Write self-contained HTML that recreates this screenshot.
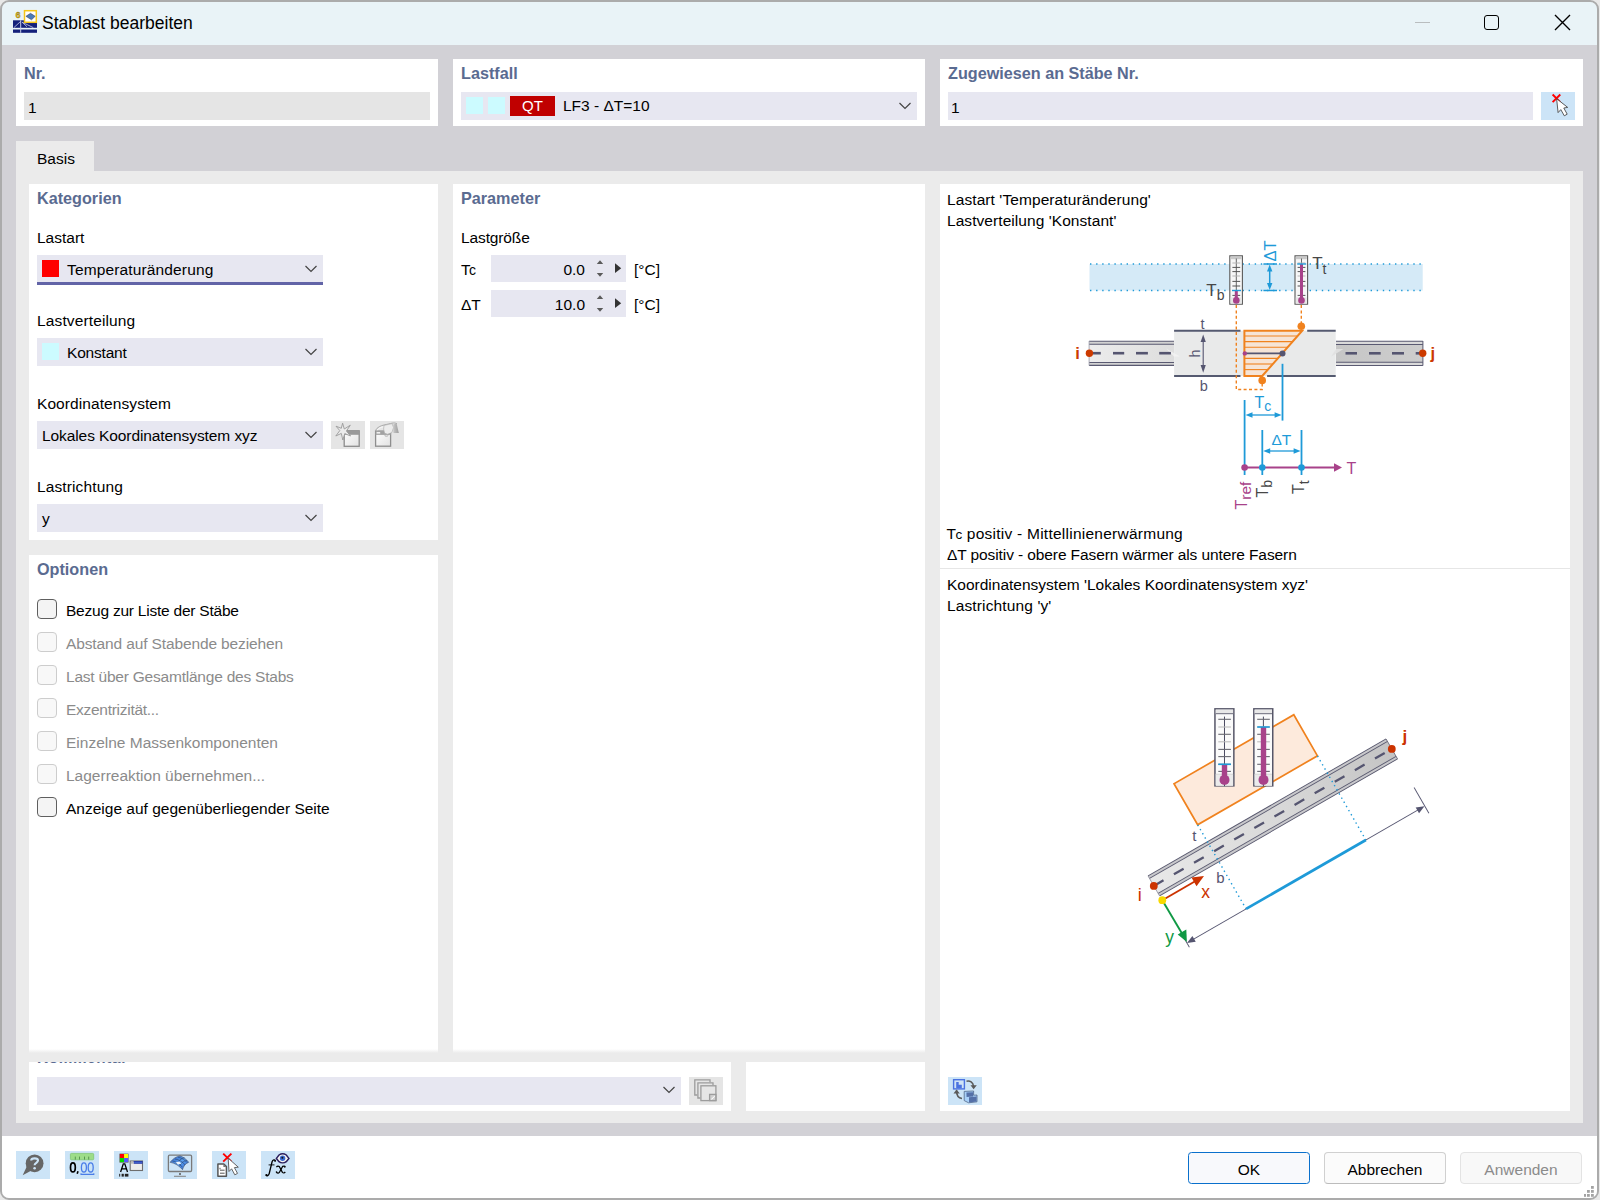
<!DOCTYPE html>
<html><head><meta charset="utf-8">
<style>
*{box-sizing:border-box}
html,body{margin:0;padding:0}
body{width:1600px;height:1200px;overflow:hidden;position:relative;background:#e8e8e8;font-family:"Liberation Sans",sans-serif;font-size:15.5px;color:#000}
.a{position:absolute}
.t{position:absolute;white-space:nowrap;line-height:20px;height:20px}
.h{position:absolute;white-space:nowrap;line-height:20px;height:20px;font-weight:bold;color:#5a6b91;font-size:16.2px}
.w{position:absolute;background:#fff}
.dd{position:absolute;background:#e7e7f1}
.chev{position:absolute;width:12px;height:8px}
.cb{position:absolute;width:20px;height:20px;border:1px solid #5f5f5f;border-radius:4px;background:#f4f4f4}
.cbd{border-color:#cdcdcd;background:#f8f8f8}
.dis{color:#8b8b8b}
.ib{position:absolute;background:#cce4f7}
</style></head><body>
<!-- window frame -->
<div class="a" id="win" style="left:0;top:0;width:1599px;height:1200px;border:2px solid #ababab;border-radius:9px;overflow:hidden;background:#d2d1d6">
  <div class="a" style="left:0;top:0;width:1600px;height:43px;background:#e9f3f7"></div>
  <div class="a" style="left:0;top:1134px;width:1600px;height:70px;background:#fff"></div>
</div>

<!-- title bar -->
<svg class="a" style="left:10px;top:7px" width="30" height="28" viewBox="10 7 30 28">
  <rect x="13" y="20.3" width="24" height="7.5" fill="#14207a"/>
  <rect x="13" y="29.5" width="24" height="3.3" fill="#14207a"/>
  <line x1="20.7" y1="20.3" x2="20.7" y2="32.8" stroke="#c8cce8" stroke-width="1"/>
  <path d="M14 27.5 L20.5 21.5 M22.1 22.2 L33.3 27.6 M22.1 22.2 L27 26.8" stroke="#c8cce8" stroke-width="0.8" fill="none"/>
  <rect x="24.5" y="10.7" width="11.8" height="11.6" fill="#fff" stroke="#f5c518" stroke-width="1.5"/>
  <path d="M25.9 16.3 L30.5 13.3 L35.2 16.3 L31.5 19.8 Z" fill="#4a7ab8" stroke="#334" stroke-width="0.5"/>
  <text x="15.6" y="18.4" font-size="9" font-weight="bold" fill="#e8b800" stroke="#6a5a20" stroke-width="0.3" font-family="Liberation Sans">6</text>
</svg>
<div class="t" style="left:42px;top:13px;font-size:17.5px">Stablast bearbeiten</div>
<div class="a" style="left:1415px;top:22px;width:15px;height:1px;background:#b9bdbf"></div>
<div class="a" style="left:1484px;top:15px;width:15px;height:15px;border:1.7px solid #000;border-radius:3px"></div>
<svg class="a" style="left:1554px;top:14px" width="17" height="17" viewBox="0 0 17 17"><path d="M1 1 L16 16 M16 1 L1 16" stroke="#000" stroke-width="1.4"/></svg>

<!-- top panels -->
<div class="w" style="left:16px;top:59px;width:422px;height:67px"></div>
<div class="h" style="left:24px;top:63px">Nr.</div>
<div class="a" style="left:24px;top:92px;width:406px;height:28px;background:#e5e5e5"></div>
<div class="t" style="left:28px;top:98px">1</div>

<div class="w" style="left:453px;top:59px;width:472px;height:67px"></div>
<div class="h" style="left:461px;top:63px">Lastfall</div>
<div class="dd" style="left:461px;top:92px;width:456px;height:28px"></div>
<div class="a" style="left:466px;top:97px;width:17px;height:17px;background:#ccfbff"></div>
<div class="a" style="left:488px;top:97px;width:17px;height:17px;background:#ccfbff"></div>
<div class="a" style="left:510px;top:96px;width:45px;height:20px;background:#c00000;color:#fff;text-align:center;line-height:20px;font-size:15px">QT</div>
<div class="t" style="left:563px;top:96px">LF3 - ΔT=10</div>
<svg class="chev" style="left:899px;top:102px" viewBox="0 0 12 8"><path d="M0.5 1 L6 6.5 L11.5 1" stroke="#444" stroke-width="1.2" fill="none"/></svg>

<div class="w" style="left:940px;top:59px;width:643px;height:67px"></div>
<div class="h" style="left:948px;top:63px">Zugewiesen an Stäbe Nr.</div>
<div class="dd" style="left:948px;top:92px;width:585px;height:28px"></div>
<div class="t" style="left:951px;top:98px">1</div>
<div class="ib" style="left:1541px;top:92px;width:34px;height:28px"></div>
<svg class="a" style="left:1541px;top:92px" width="34" height="28" viewBox="1541 92 34 28">
  <path d="M1552.6 94.5 L1560.3 102.2 M1560.3 94.5 L1552.6 102.2" stroke="#f00" stroke-width="1.9"/>
  <path d="M1556.6 98.7 L1558.1 112.6 L1560.8 109.6 L1564.3 115.8 L1567.2 114.2 L1563.8 108 L1567.7 107.4 Z" fill="#fff" stroke="#4a4a4a" stroke-width="0.9" stroke-linejoin="round"/>
</svg>

<!-- tab -->
<div class="a" style="left:16px;top:141px;width:78px;height:30px;background:#ebebeb"></div>
<div class="t" style="left:37px;top:149px">Basis</div>
<div class="a" style="left:16px;top:171px;width:1567px;height:952px;background:#ebebeb"></div>

<!-- Kategorien -->
<div class="w" style="left:29px;top:184px;width:409px;height:356px"></div>
<div class="h" style="left:37px;top:188px">Kategorien</div>
<div class="t" style="left:37px;top:228px">Lastart</div>
<div class="dd" style="left:37px;top:255px;width:286px;height:30px"></div>
<div class="a" style="left:37px;top:282px;width:286px;height:3px;background:#6264a7"></div>
<div class="a" style="left:42px;top:260px;width:17px;height:17px;background:#ff0000"></div>
<div class="t" style="left:67px;top:260px;letter-spacing:0.14px">Temperaturänderung</div>
<svg class="chev" style="left:305px;top:265px" viewBox="0 0 12 8"><path d="M0.5 1 L6 6.5 L11.5 1" stroke="#444" stroke-width="1.2" fill="none"/></svg>

<div class="t" style="left:37px;top:311px;letter-spacing:0.13px">Lastverteilung</div>
<div class="dd" style="left:37px;top:338px;width:286px;height:28px"></div>
<div class="a" style="left:42px;top:343px;width:17px;height:17px;background:#ccfbff"></div>
<div class="t" style="left:67px;top:343px;letter-spacing:-0.2px">Konstant</div>
<svg class="chev" style="left:305px;top:348px" viewBox="0 0 12 8"><path d="M0.5 1 L6 6.5 L11.5 1" stroke="#444" stroke-width="1.2" fill="none"/></svg>

<div class="t" style="left:37px;top:394px;letter-spacing:0.08px">Koordinatensystem</div>
<div class="dd" style="left:37px;top:421px;width:286px;height:28px"></div>
<div class="t" style="left:42px;top:426px;letter-spacing:-0.09px">Lokales Koordinatensystem xyz</div>
<svg class="chev" style="left:305px;top:431px" viewBox="0 0 12 8"><path d="M0.5 1 L6 6.5 L11.5 1" stroke="#444" stroke-width="1.2" fill="none"/></svg>
<div class="a" style="left:331px;top:421px;width:34px;height:28px;background:#e5e5e5"></div>
<div class="a" style="left:370px;top:421px;width:34px;height:28px;background:#e5e5e5"></div>
<svg class="a" style="left:331px;top:421px" width="34" height="28" viewBox="331 421 34 28">
  <defs><linearGradient id="wg" x1="0" y1="0" x2="1" y2="1"><stop offset="0" stop-color="#fff"/><stop offset="1" stop-color="#e2e2e2"/></linearGradient></defs>
  <rect x="344.2" y="430.8" width="15" height="15.5" fill="url(#wg)" stroke="#8c8c8c" stroke-width="1.3"/>
  <rect x="344.2" y="430.8" width="15" height="4" fill="#9a9a9a"/>
  <path d="M342.6 423.2 L344.3 429 L350.3 425.2 L346.4 431 L350.6 436 L344.8 433.6 L342.8 440 L341.3 433.4 L335.8 436 L339.8 430.6 L336 426.2 L341.3 428.3 Z" fill="#ececec" stroke="#9a9a9a" stroke-width="0.9" stroke-linejoin="round"/>
</svg>
<svg class="a" style="left:370px;top:421px" width="34" height="28" viewBox="370 421 34 28">
  <defs><linearGradient id="cuff" x1="0" x2="1"><stop offset="0" stop-color="#c8c8c8"/><stop offset="1" stop-color="#9c9c9c"/></linearGradient></defs>
  <rect x="375.6" y="431.1" width="15" height="15.1" fill="url(#wg)" stroke="#8e8e8e" stroke-width="1.3"/>
  <rect x="375.6" y="431.1" width="15" height="3.8" fill="#a2a2a2"/>
  <rect x="376.6" y="432" width="3.6" height="1.6" fill="#f0f0f0"/>
  <path d="M375.4 430.6 C377 427.2 381 425.6 384 425 C387 424.3 390 423.7 392 423.2 C394 422.7 395.8 423 397 423.8" fill="none" stroke="#a4a4a4" stroke-width="0.9"/>
  <path d="M384 425.4 L392 423.6 L393.6 427.5 L391.8 432.6 L387.6 434.2 L384.6 433.2 L383.6 429 Z" fill="#ececec" stroke="#a8a8a8" stroke-width="0.6"/>
  <path d="M393.2 424.4 L396.6 423.4 L398.8 433 L393.4 433 Z" fill="url(#cuff)"/>
  <path d="M377 430.2 C378.5 428.4 381 427.3 383.2 426.8" fill="none" stroke="#fafafa" stroke-width="0.9"/>
  <ellipse cx="386.4" cy="435.6" rx="1.6" ry="0.9" fill="#e0e0e0" stroke="#a0a0a0" stroke-width="0.5"/>
</svg>

<div class="t" style="left:37px;top:477px;letter-spacing:0.12px">Lastrichtung</div>
<div class="dd" style="left:37px;top:504px;width:286px;height:28px"></div>
<div class="t" style="left:42px;top:509px">y</div>
<svg class="chev" style="left:305px;top:514px" viewBox="0 0 12 8"><path d="M0.5 1 L6 6.5 L11.5 1" stroke="#444" stroke-width="1.2" fill="none"/></svg>

<!-- Optionen -->
<div class="w" style="left:29px;top:555px;width:409px;height:498px;background:linear-gradient(#fff 0,#fff 494px,#ebebeb 498px)"></div>
<div class="h" style="left:37px;top:559px">Optionen</div>
<div class="cb" style="left:37px;top:599px"></div><div class="t" style="left:66px;top:601px;letter-spacing:-0.225px">Bezug zur Liste der Stäbe</div>
<div class="cb cbd" style="left:37px;top:632px"></div><div class="t dis" style="left:66px;top:634px;letter-spacing:-0.125px">Abstand auf Stabende beziehen</div>
<div class="cb cbd" style="left:37px;top:665px"></div><div class="t dis" style="left:66px;top:667px;letter-spacing:-0.217px">Last über Gesamtlänge des Stabs</div>
<div class="cb cbd" style="left:37px;top:698px"></div><div class="t dis" style="left:66px;top:700px;letter-spacing:-0.28px">Exzentrizität...</div>
<div class="cb cbd" style="left:37px;top:731px"></div><div class="t dis" style="left:66px;top:733px">Einzelne Massenkomponenten</div>
<div class="cb cbd" style="left:37px;top:764px"></div><div class="t dis" style="left:66px;top:766px">Lagerreaktion übernehmen...</div>
<div class="cb" style="left:37px;top:797px"></div><div class="t" style="left:66px;top:799px">Anzeige auf gegenüberliegender Seite</div>

<!-- Parameter -->
<div class="w" style="left:453px;top:184px;width:472px;height:869px;background:linear-gradient(#fff 0,#fff 865px,#ebebeb 869px)"></div>
<div class="h" style="left:461px;top:188px">Parameter</div>
<div class="t" style="left:461px;top:228px;letter-spacing:-0.12px">Lastgröße</div>
<div class="t" style="left:461px;top:260px">T<span style="font-size:14px;margin-left:-1.5px">c</span></div>
<div class="dd" style="left:491px;top:255px;width:135px;height:27px"></div>
<div class="t" style="left:491px;top:260px;width:94px;text-align:right">0.0</div>
<div class="t" style="left:461px;top:295px">ΔT</div>
<div class="dd" style="left:491px;top:290px;width:135px;height:27px"></div>
<div class="t" style="left:491px;top:295px;width:94px;text-align:right">10.0</div>
<svg class="a" style="left:591px;top:255px" width="36" height="62" viewBox="591 255 36 62">
  <g fill="#5a5a5a">
  <polygon points="600,260.3 596.8,264 603.2,264"/><polygon points="600,276.7 596.8,273 603.2,273"/>
  <polygon points="600,295.3 596.8,299 603.2,299"/><polygon points="600,311.7 596.8,308 603.2,308"/>
  </g>
  <g fill="#333"><polygon points="615,263.3 621.2,268.2 615,273"/><polygon points="615,298.3 621.2,303.2 615,308"/></g>
</svg>
<div class="t" style="left:634px;top:260px">[°C]</div>
<div class="t" style="left:634px;top:295px">[°C]</div>

<!-- right info panel -->
<div class="w" style="left:940px;top:184px;width:630px;height:927px"></div>
<div class="t" style="left:947px;top:190px;letter-spacing:0.085px">Lastart 'Temperaturänderung'</div>
<div class="t" style="left:947px;top:211px;letter-spacing:0.062px">Lastverteilung 'Konstant'</div>
<div class="t" style="left:946.5px;top:524px">T<span style="font-size:13.5px;margin-left:-0.5px">c</span><span style="letter-spacing:0.25px"> positiv - Mittellinienerwärmung</span></div>
<div class="t" style="left:947px;top:545px;letter-spacing:-0.1px">ΔT positiv - obere Fasern wärmer als untere Fasern</div>
<div class="a" style="left:940px;top:568px;width:630px;height:1px;background:#e6e6e6"></div>
<div class="t" style="left:947px;top:575px">Koordinatensystem 'Lokales Koordinatensystem xyz'</div>
<div class="t" style="left:947px;top:596px;letter-spacing:0.127px">Lastrichtung 'y'</div>

<!-- DIAG1 -->
<svg class="a" style="left:940px;top:184px" width="630" height="384" viewBox="940 184 630 384" font-family="Liberation Sans">
<defs>
<linearGradient id="bmL" x1="0" x2="1"><stop offset="0" stop-color="#ececec"/><stop offset="1" stop-color="#dddddd"/></linearGradient>
<linearGradient id="bmR" x1="0" x2="1"><stop offset="0" stop-color="#c6c6c6"/><stop offset="1" stop-color="#cdcdcd"/></linearGradient>
</defs>
<!-- band -->
<rect x="1089.5" y="264" width="333.2" height="26.5" fill="#d5eaf7"/>
<line x1="1090" y1="264" x2="1423" y2="264" stroke="#1e9ad8" stroke-width="1.4" stroke-dasharray="1.4 4.7"/>
<line x1="1090" y1="290.5" x2="1423" y2="290.5" stroke="#1e9ad8" stroke-width="1.4" stroke-dasharray="1.4 4.7"/>
<!-- thermometer left -->
<g>
<rect x="1229.8" y="255.8" width="12.6" height="48.4" fill="#f7f7f7" stroke="#5a5a5a" stroke-width="1.1"/>
<rect x="1230.6" y="256.6" width="11" height="2.6" fill="#c8c8c8"/>
<rect x="1230.6" y="297.4" width="11" height="6.3" fill="#e6e6e6"/>
<line x1="1236.3" y1="258.5" x2="1236.3" y2="302" stroke="#555" stroke-width="0.9"/>
<g stroke-width="1">
<line x1="1232.4" y1="263" x2="1240.2" y2="263" stroke="#b5b5b5"/>
<line x1="1232.4" y1="267.4" x2="1240.2" y2="267.4" stroke="#555"/>
<line x1="1232.4" y1="271.6" x2="1240.2" y2="271.6" stroke="#555"/>
<line x1="1232.4" y1="276" x2="1240.2" y2="276" stroke="#b5b5b5"/>
<line x1="1232.4" y1="281.4" x2="1240.2" y2="281.4" stroke="#555"/>
<line x1="1232.4" y1="286" x2="1240.2" y2="286" stroke="#555"/>
<line x1="1232.4" y1="295.4" x2="1240.2" y2="295.4" stroke="#555"/>
</g>
</g>
<g transform="translate(65.2,0)">
<rect x="1229.8" y="255.8" width="12.6" height="48.4" fill="#f7f7f7" stroke="#5a5a5a" stroke-width="1.1"/>
<rect x="1230.6" y="256.6" width="11" height="2.6" fill="#c8c8c8"/>
<rect x="1230.6" y="297.4" width="11" height="6.3" fill="#e6e6e6"/>
<line x1="1236.3" y1="258.5" x2="1236.3" y2="302" stroke="#555" stroke-width="0.9"/>
<g stroke-width="1">
<line x1="1232.4" y1="263" x2="1240.2" y2="263" stroke="#b5b5b5"/>
<line x1="1232.4" y1="267.4" x2="1240.2" y2="267.4" stroke="#555"/>
<line x1="1232.4" y1="271.6" x2="1240.2" y2="271.6" stroke="#555"/>
<line x1="1232.4" y1="276" x2="1240.2" y2="276" stroke="#b5b5b5"/>
<line x1="1232.4" y1="281.4" x2="1240.2" y2="281.4" stroke="#555"/>
<line x1="1232.4" y1="286" x2="1240.2" y2="286" stroke="#555"/>
<line x1="1232.4" y1="295.4" x2="1240.2" y2="295.4" stroke="#555"/>
</g>
</g>
<rect x="1234.8" y="290.5" width="3" height="10" fill="#a8428a"/>
<circle cx="1236.3" cy="300.4" r="3.3" fill="#a8428a"/>
<line x1="1232" y1="290.5" x2="1241" y2="290.5" stroke="#1e9ad8" stroke-width="1.4"/>
<rect x="1300" y="264" width="3" height="36" fill="#a8428a"/>
<circle cx="1301.5" cy="300.4" r="3.3" fill="#a8428a"/>
<line x1="1297.2" y1="264" x2="1306.2" y2="264" stroke="#1e9ad8" stroke-width="1.4"/>
<!-- delta T arrow top -->
<g stroke="#1e9ad8" stroke-width="1.5">
<line x1="1263.4" y1="264" x2="1277" y2="264"/>
<line x1="1263.4" y1="290.5" x2="1277" y2="290.5"/>
<line x1="1269.7" y1="268" x2="1269.7" y2="287"/>
</g>
<polygon points="1269.7,264.6 1267,271.5 1272.4,271.5" fill="#1e9ad8"/>
<polygon points="1269.7,289.9 1267,283 1272.4,283" fill="#1e9ad8"/>
<text transform="translate(1276.2,261.5) rotate(-90)" font-size="16.5" fill="#1e9ad8">ΔT</text>
<text x="1312.2" y="269.3" font-size="17" fill="#474747">T<tspan font-size="14" dy="4.4">t</tspan></text>
<text x="1206.3" y="295.6" font-size="17" fill="#474747">T<tspan font-size="14" dy="3.9">b</tspan></text>
<!-- beam left -->
<rect x="1089.1" y="341.2" width="85" height="24.1" fill="url(#bmL)"/>
<rect x="1089.1" y="341.2" width="85" height="3.1" fill="#d2d2d2"/>
<rect x="1089.1" y="362.4" width="85" height="3" fill="#d2d2d2"/>
<g stroke="#5a5a72" stroke-width="1.1">
<line x1="1089.1" y1="341.2" x2="1174.1" y2="341.2"/>
<line x1="1089.1" y1="344.3" x2="1174.1" y2="344.3"/>
<line x1="1089.1" y1="362.5" x2="1174.1" y2="362.5"/>
<line x1="1089.1" y1="365.4" x2="1174.1" y2="365.4"/>
</g>
<line x1="1089.1" y1="341" x2="1089.1" y2="365.5" stroke="#9a9aaa" stroke-width="0.8"/>
<!-- middle section -->
<rect x="1174.1" y="330.75" width="161.6" height="45.25" fill="#e9eaea"/>
<g stroke="#555a70" stroke-width="2">
<line x1="1174.1" y1="330.75" x2="1240.5" y2="330.75"/>
<line x1="1307.2" y1="330.75" x2="1335.7" y2="330.75"/>
<line x1="1174.1" y1="376" x2="1240.5" y2="376"/>
<line x1="1267.1" y1="376" x2="1335.7" y2="376"/>
</g>
<!-- beam right -->
<rect x="1336" y="341.25" width="86.9" height="24.25" fill="url(#bmR)"/>
<rect x="1336" y="341.25" width="86.9" height="3.2" fill="#dadada"/>
<rect x="1336" y="362.3" width="86.9" height="3.2" fill="#dadada"/>
<g stroke="#5a5a72" stroke-width="1.1">
<line x1="1336" y1="341.25" x2="1422.9" y2="341.25"/>
<line x1="1336" y1="344.5" x2="1422.9" y2="344.5"/>
<line x1="1336" y1="362.25" x2="1422.9" y2="362.25"/>
<line x1="1336" y1="365.5" x2="1422.9" y2="365.5"/>
</g>
<line x1="1422.9" y1="341" x2="1422.9" y2="365.6" stroke="#5a5a72" stroke-width="1"/>
<polygon points="1166,348.5 1180,356.6 1174,356.6" fill="#f4f4f4" opacity="0.8"/>
<polygon points="1331,356.7 1343.5,348.9 1336,348.9" fill="#e0e0e0" opacity="0.9"/>
<!-- dashes -->
<g stroke="#555570" stroke-width="2.6">
<line x1="1092.7" y1="353.2" x2="1100.8" y2="353.2"/>
<line x1="1113" y1="353.2" x2="1124.2" y2="353.2"/>
<line x1="1136" y1="353.2" x2="1147.9" y2="353.2"/>
<line x1="1159.2" y1="353.2" x2="1170.9" y2="353.2"/>
<line x1="1345.5" y1="353.3" x2="1357" y2="353.3"/>
<line x1="1369" y1="353.3" x2="1380.7" y2="353.3"/>
<line x1="1392" y1="353.3" x2="1404" y2="353.3"/>
<line x1="1415.7" y1="353.3" x2="1421" y2="353.3"/>
</g>
<circle cx="1089.4" cy="353.2" r="3.7" fill="#cc3a00"/>
<circle cx="1422.7" cy="353.3" r="3.7" fill="#cc3a00"/>
<text x="1075.3" y="359.3" font-size="16.5" font-weight="bold" fill="#cc3a00">i</text>
<text x="1430.6" y="358.6" font-size="16.5" font-weight="bold" fill="#cc3a00">j</text>
<!-- h dim -->
<line x1="1203.2" y1="338" x2="1203.2" y2="369" stroke="#555570" stroke-width="1.1"/>
<polygon points="1203.2,334.5 1200.6,342 1205.8,342" fill="#555570"/>
<polygon points="1203.2,372.8 1200.6,365 1205.8,365" fill="#555570"/>
<text transform="translate(1200,357.4) rotate(-90)" font-size="14.5" fill="#555570">h</text>
<text x="1200.6" y="329" font-size="14.5" fill="#555570">t</text>
<text x="1199.7" y="390.7" font-size="14.5" fill="#555570">b</text>
<!-- orange trapezoid -->
<polygon points="1244.4,330.75 1302.2,330.75 1262.2,376 1244.4,376" fill="#f6e4d6"/>
<g stroke="#f0821e" stroke-width="1.1">
<line x1="1244.4" y1="336" x2="1297.6" y2="336"/>
<line x1="1244.4" y1="341.6" x2="1292.6" y2="341.6"/>
<line x1="1244.4" y1="347.2" x2="1287.7" y2="347.2"/>
<line x1="1244.4" y1="358.4" x2="1277.8" y2="358.4"/>
<line x1="1244.4" y1="364" x2="1272.8" y2="364"/>
<line x1="1244.4" y1="369.6" x2="1267.9" y2="369.6"/>
</g>
<polygon points="1244.4,330.75 1302.2,330.75 1262.2,376 1244.4,376" fill="none" stroke="#f0821e" stroke-width="2"/>
<line x1="1244.8" y1="353.4" x2="1282.5" y2="353.4" stroke="#555570" stroke-width="1.6"/>
<circle cx="1244.8" cy="353.4" r="2.2" fill="#a8428a"/>
<circle cx="1282.5" cy="353.4" r="3" fill="#555570"/>
<circle cx="1301.3" cy="326.2" r="3.8" fill="#f0821e"/>
<circle cx="1262.2" cy="380.4" r="3.8" fill="#f0821e"/>
<path d="M1236.3 305 V389.5 H1262.2 V383 M1301.3 305 V323" fill="none" stroke="#f0821e" stroke-width="1.4" stroke-dasharray="3 2.4"/>
<!-- lower dims -->
<g stroke="#1e9ad8" stroke-width="1.8">
<line x1="1282.5" y1="363.8" x2="1282.5" y2="420.6"/>
<line x1="1244.6" y1="400" x2="1244.6" y2="475"/>
<line x1="1262.3" y1="430" x2="1262.3" y2="475"/>
<line x1="1301.5" y1="430" x2="1301.5" y2="475"/>
</g>
<g stroke="#1e9ad8" stroke-width="1.3">
<line x1="1249" y1="415" x2="1278" y2="415"/>
<line x1="1266.5" y1="451" x2="1297" y2="451"/>
</g>
<g fill="#1e9ad8">
<polygon points="1245.5,415 1252.5,412.2 1252.5,417.8"/>
<polygon points="1281.6,415 1274.6,412.2 1274.6,417.8"/>
<polygon points="1263.2,451 1270.2,448.2 1270.2,453.8"/>
<polygon points="1300.6,451 1293.6,448.2 1293.6,453.8"/>
</g>
<text x="1254.5" y="408" font-size="16" fill="#1e9ad8">T<tspan font-size="14" dy="3">c</tspan></text>
<text x="1271.5" y="444.8" font-size="15.5" fill="#1e9ad8">ΔT</text>
<line x1="1244.6" y1="467.5" x2="1336" y2="467.5" stroke="#a8428a" stroke-width="1.8"/>
<polygon points="1342,467.5 1334,463.3 1334,471.7" fill="#a8428a"/>
<circle cx="1244.6" cy="467.5" r="3.3" fill="#a8428a"/>
<circle cx="1262.3" cy="467.5" r="3.3" fill="#1e9ad8"/>
<circle cx="1301.5" cy="467.5" r="3.3" fill="#1e9ad8"/>
<text x="1346.5" y="473.8" font-size="16" fill="#a8428a">T</text>
<text transform="translate(1246.5,509.5) rotate(-90)" font-size="16" fill="#a8428a">T<tspan font-size="15.5" dy="4.5">ref</tspan></text>
<text transform="translate(1267.8,497.5) rotate(-90)" font-size="16" fill="#474747">T<tspan font-size="14" dy="4.5">b</tspan></text>
<text transform="translate(1304.3,494) rotate(-90)" font-size="16" fill="#474747">T<tspan font-size="14" dy="4.5">t</tspan></text>
</svg>
<!-- /DIAG1 -->
<!-- DIAG2 -->
<svg class="a" style="left:940px;top:620px" width="630" height="400" viewBox="940 620 630 400" font-family="Liberation Sans">
<defs>
<linearGradient id="bm2" x1="0" x2="1"><stop offset="0" stop-color="#e8e8e8"/><stop offset="0.55" stop-color="#d8d8d8"/><stop offset="1" stop-color="#c4c4c4"/></linearGradient>
</defs>
<g transform="translate(1153.8,885.9) rotate(-29.92)">
<rect x="68.5" y="-78.5" width="138.2" height="47.4" fill="#fdeadc" stroke="#f0821e" stroke-width="1.7"/>
<rect x="0" y="-11.5" width="274.6" height="23" fill="url(#bm2)"/>
<rect x="0" y="-11.5" width="274.6" height="2.8" fill="#c9c9cc"/>
<rect x="0" y="8.7" width="274.6" height="2.8" fill="#c9c9cc"/>
<g stroke="#5a5a70" stroke-width="0.9">
<line x1="0" y1="-11.5" x2="274.6" y2="-11.5"/>
<line x1="0" y1="-8.6" x2="274.6" y2="-8.6"/>
<line x1="0" y1="8.6" x2="274.6" y2="8.6"/>
<line x1="0" y1="11.5" x2="274.6" y2="11.5"/>
</g>
<line x1="0" y1="-11.5" x2="0" y2="11.5" stroke="#8a8a9a" stroke-width="0.7"/>
<line x1="274.6" y1="-11.5" x2="274.6" y2="11.5" stroke="#6a6a7a" stroke-width="0.8"/>
<line x1="0" y1="0" x2="272" y2="0" stroke="#555570" stroke-width="2.3" stroke-dasharray="11.2 12"/>
<g stroke="#1e9ad8" stroke-width="1.4" stroke-dasharray="1.4 3.4">
<line x1="68.5" y1="-31" x2="68.5" y2="66"/>
<line x1="206.7" y1="-31" x2="206.7" y2="66"/>
</g>
<line x1="6" y1="66" x2="268.5" y2="66" stroke="#555570" stroke-width="0.9"/>
<polygon points="0.3,66 8.5,62.6 8.5,69.4" fill="#555570"/>
<polygon points="274.3,66 266.1,62.6 266.1,69.4" fill="#555570"/>
<line x1="274.7" y1="44.5" x2="274.7" y2="74.2" stroke="#555570" stroke-width="0.9"/>
<line x1="0.2" y1="60" x2="0.2" y2="71" stroke="#555570" stroke-width="0.9"/>
<line x1="68.5" y1="66" x2="206.7" y2="66" stroke="#1e9ad8" stroke-width="2.7"/>
</g>
<g transform="translate(1214.2,708.1)">
<rect x="0.75" y="0.75" width="18.9" height="77" fill="#fafafa" stroke="#565668" stroke-width="1.5"/>
<rect x="1.5" y="1.5" width="17.4" height="4" fill="#e8e8e8"/>
<line x1="1.5" y1="5.6" x2="18.9" y2="5.6" stroke="#6a6a7a" stroke-width="1"/>
<rect x="1.5" y="66.1" width="17.4" height="11.7" fill="#ebebeb"/>
<line x1="1.5" y1="66.1" x2="18.9" y2="66.1" stroke="#d0d0d0" stroke-width="0.8"/>
<line x1="10.3" y1="8.5" x2="10.3" y2="78" stroke="#4a4a62" stroke-width="1"/>
<g stroke-width="1.1">
<line x1="4.1" y1="11.2" x2="16.7" y2="11.2" stroke="#686870"/>
<line x1="4.1" y1="18.9" x2="16.7" y2="18.9" stroke="#bdbdbd"/>
<line x1="4.1" y1="26.2" x2="16.7" y2="26.2" stroke="#686870"/>
<line x1="4.1" y1="33.7" x2="16.7" y2="33.7" stroke="#bdbdbd"/>
<line x1="4.1" y1="41.3" x2="16.7" y2="41.3" stroke="#686870"/>
<line x1="4.1" y1="48.5" x2="16.7" y2="48.5" stroke="#686870"/>
<line x1="4.1" y1="56.2" x2="16.7" y2="56.2" stroke="#686870"/>
<line x1="4.1" y1="63.3" x2="16.7" y2="63.3" stroke="#686870"/>
</g>
</g>
<g transform="translate(1253.1,708.1)">
<rect x="0.75" y="0.75" width="18.9" height="77" fill="#fafafa" stroke="#565668" stroke-width="1.5"/>
<rect x="1.5" y="1.5" width="17.4" height="4" fill="#e8e8e8"/>
<line x1="1.5" y1="5.6" x2="18.9" y2="5.6" stroke="#6a6a7a" stroke-width="1"/>
<rect x="1.5" y="66.1" width="17.4" height="11.7" fill="#ebebeb"/>
<line x1="1.5" y1="66.1" x2="18.9" y2="66.1" stroke="#d0d0d0" stroke-width="0.8"/>
<line x1="10.3" y1="8.5" x2="10.3" y2="78" stroke="#4a4a62" stroke-width="1"/>
<g stroke-width="1.1">
<line x1="4.1" y1="11.2" x2="16.7" y2="11.2" stroke="#686870"/>
<line x1="4.1" y1="18.9" x2="16.7" y2="18.9" stroke="#bdbdbd"/>
<line x1="4.1" y1="26.2" x2="16.7" y2="26.2" stroke="#686870"/>
<line x1="4.1" y1="33.7" x2="16.7" y2="33.7" stroke="#bdbdbd"/>
<line x1="4.1" y1="41.3" x2="16.7" y2="41.3" stroke="#686870"/>
<line x1="4.1" y1="48.5" x2="16.7" y2="48.5" stroke="#686870"/>
<line x1="4.1" y1="56.2" x2="16.7" y2="56.2" stroke="#686870"/>
<line x1="4.1" y1="63.3" x2="16.7" y2="63.3" stroke="#686870"/>
</g>
</g>
<rect x="1221.8" y="764.3" width="5.4" height="14" fill="#a8428a"/>
<circle cx="1224.5" cy="779.9" r="5" fill="#a8428a"/>
<line x1="1218.3" y1="764.3" x2="1230.9" y2="764.3" stroke="#1e9ad8" stroke-width="1.6"/>
<rect x="1260.8" y="727" width="5.4" height="51" fill="#a8428a"/>
<circle cx="1263.5" cy="779.9" r="5" fill="#a8428a"/>
<line x1="1257.2" y1="727" x2="1269.8" y2="727" stroke="#1e9ad8" stroke-width="1.6"/>
<!-- axes -->
<line x1="1162.3" y1="900.2" x2="1196" y2="880.8" stroke="#cc3300" stroke-width="1.9"/>
<polygon points="1204,876.1 1191.5,877.5 1196.5,886.2" fill="#cc3300"/>
<line x1="1162.3" y1="900.2" x2="1182" y2="933.6" stroke="#109944" stroke-width="1.9"/>
<polygon points="1186.9,941.9 1177.7,934.6 1186.3,929.5" fill="#109944"/>
<circle cx="1162.3" cy="900.2" r="3.9" fill="#f7d900"/>
<circle cx="1153.8" cy="885.9" r="3.9" fill="#cc3300"/>
<circle cx="1391.8" cy="748.9" r="3.9" fill="#cc3300"/>
<text x="1137.8" y="901.3" font-size="18" fill="#cc3300">i</text>
<text x="1402.5" y="741.5" font-size="17" font-weight="bold" fill="#cc3300">j</text>
<text x="1201.3" y="897.5" font-size="17.5" fill="#cc3300">x</text>
<text x="1165.2" y="942.6" font-size="17.5" fill="#109944">y</text>
<text x="1192.3" y="840.6" font-size="15" fill="#555570">t</text>
<text x="1216.2" y="882.8" font-size="15" fill="#555570">b</text>
</svg>
<!-- /DIAG2 -->
<!-- Kommentar -->
<div class="w" style="left:29px;top:1062px;width:702px;height:49px"></div>
<div class="a" style="left:37px;top:1062px;width:100px;height:1px;overflow:hidden"><div class="h" style="left:0;top:-14.5px;font-size:15.3px;letter-spacing:0.65px">Kommentar</div></div>
<div class="dd" style="left:37px;top:1077px;width:644px;height:28px"></div>
<svg class="chev" style="left:663px;top:1086px" viewBox="0 0 12 8"><path d="M0.5 1 L6 6.5 L11.5 1" stroke="#444" stroke-width="1.2" fill="none"/></svg>
<div class="a" style="left:689px;top:1077px;width:34px;height:28px;background:#e5e5e5"></div>
<svg class="a" style="left:689px;top:1077px" width="34" height="28" viewBox="689 1077 34 28">
  <g fill="none" stroke="#9c9c9c" stroke-width="1.3">
  <path d="M697.3 1095 H694.8 V1079.8 H710 V1082.2"/>
  <path d="M700.3 1098 H697.9 V1082.8 H713 V1085.2"/>
  <rect x="700.9" y="1085.8" width="15" height="14.8" fill="#e6e6e6"/>
  <rect x="709.6" y="1094.4" width="6.3" height="6.2" fill="#cfcfcf"/>
  </g>
  <path d="M710.6 1099.6 L714.8 1095.4 L714.8 1096.8 L712 1099.6 Z" fill="#fff"/>
</svg>
<div class="w" style="left:746px;top:1062px;width:179px;height:49px"></div>
<div class="ib" style="left:948px;top:1077px;width:34px;height:28px"></div>
<svg class="a" style="left:948px;top:1077px" width="34" height="28" viewBox="948 1077 34 28">
  <rect x="953.6" y="1079.7" width="10.8" height="9.2" fill="#cfe3f6" stroke="#4a72e0" stroke-width="1.4"/>
  <path d="M956.2 1081.9 H958.7 V1084.8 H961.8 V1088.2 H956.2 Z" fill="#4a72e0"/>
  <path d="M966.5 1081.2 C970 1080.5 973 1082 973.5 1086" fill="none" stroke="#5a5a5a" stroke-width="1.6"/>
  <polygon points="970.5,1085.2 976.8,1085.2 973.6,1089.2" fill="#5a5a5a"/>
  <path d="M956.5 1090.5 C956.5 1095 958 1098 962 1098.5" fill="none" stroke="#5a5a5a" stroke-width="1.6"/>
  <polygon points="953.5,1093.5 959.8,1093.5 956.6,1089.5" fill="#5a5a5a"/>
  <path d="M964.2 1091.4 L973.6 1091 L973.6 1095.2 L977 1095 L977 1101.8 L968.6 1102.8 L964.2 1100.6 Z" fill="#a8d0f8" stroke="#44587a" stroke-width="0.7"/>
  <path d="M966.4 1092.6 L973.2 1092.2 L973.2 1096.4 L966.6 1097 Z M969 1097.2 L976.6 1096.4 L976.6 1101.6 L969 1102.4 Z" fill="#5470a8"/>
</svg>

<!-- footer -->
<div class="ib" style="left:16px;top:1151px;width:34px;height:28px"></div>
<div class="ib" style="left:65px;top:1151px;width:34px;height:28px"></div>
<div class="ib" style="left:114px;top:1151px;width:34px;height:28px"></div>
<div class="ib" style="left:163px;top:1151px;width:34px;height:28px"></div>
<div class="ib" style="left:212px;top:1151px;width:34px;height:28px"></div>
<div class="ib" style="left:261px;top:1151px;width:34px;height:28px"></div>
<svg class="a" style="left:0;top:1140px" width="320" height="50" viewBox="0 1140 320 50" font-family="Liberation Sans">
  <!-- help -->
  <circle cx="34.6" cy="1163.3" r="8.9" fill="#666"/>
  <polygon points="22.7,1175.3 27,1166 31.5,1170.5" fill="#666"/>
  <path d="M31.2 1160.6 C31.2 1157.6 38 1157.6 38 1160.6 C38 1162.8 34.6 1162.8 34.6 1165.2" fill="none" stroke="#cce4f7" stroke-width="2.1"/>
  <circle cx="34.6" cy="1168.2" r="1.3" fill="#cce4f7"/>
  <!-- 0,00 -->
  <rect x="70.4" y="1153.4" width="23.3" height="6.4" rx="1" fill="#9ddd89" stroke="#79c46a" stroke-width="0.7"/>
  <g stroke="#4f8f48" stroke-width="0.9"><line x1="75.3" y1="1156.6" x2="75.3" y2="1159.6"/><line x1="79.5" y1="1156.6" x2="79.5" y2="1159.6"/><line x1="84.5" y1="1156.6" x2="84.5" y2="1159.6"/><line x1="88.7" y1="1156.6" x2="88.7" y2="1159.6"/></g>
  <ellipse cx="72.9" cy="1167.4" rx="2.4" ry="4.5" fill="none" stroke="#000" stroke-width="1.7"/>
  <path d="M78 1171.2 L77.2 1173.8" stroke="#000" stroke-width="1.6"/>
  <ellipse cx="83.9" cy="1167.4" rx="2.5" ry="4.6" fill="none" stroke="#4a7de8" stroke-width="1.3"/>
  <ellipse cx="90.7" cy="1167.4" rx="2.5" ry="4.6" fill="none" stroke="#4a7de8" stroke-width="1.3"/>
  <path d="M81 1173.2 V1174.4 H93.8 V1173.2" fill="none" stroke="#4a7de8" stroke-width="1.1"/>
  <!-- color grid A window -->
  <rect x="119.3" y="1153.4" width="9.4" height="9.3" rx="0.6" fill="#777"/>
  <rect x="119.9" y="1154" width="4.1" height="4" fill="#f00"/><rect x="124.1" y="1154" width="4" height="4" fill="#ff0"/>
  <rect x="119.9" y="1158.1" width="4.1" height="4" fill="#0d0"/><rect x="124.1" y="1158.1" width="4" height="4" fill="#55f"/>
  <path d="M120.6 1172 L123.3 1163.9 H124.8 L127.5 1172 M121.7 1168.9 H126.4" fill="none" stroke="#000" stroke-width="1.3"/>
  <g fill="#222"><rect x="119.2" y="1173.8" width="1" height="2.8"/><rect x="121.6" y="1173.8" width="2.2" height="2.8"/><rect x="124.8" y="1173.8" width="3.6" height="2.8"/></g>
  <rect x="130.2" y="1161" width="12.3" height="9.5" fill="#ececec" stroke="#6e6e6e" stroke-width="1.1"/>
  <rect x="133.6" y="1161" width="9" height="2.8" fill="#2a3aa8"/>
  <line x1="134.2" y1="1162.4" x2="142" y2="1162.4" stroke="#4a7ae0" stroke-width="0.7"/>
  <rect x="130.8" y="1161.5" width="2.6" height="2.2" fill="#bbb"/>
  <!-- monitor -->
  <defs><linearGradient id="sg" x1="0" y1="0" x2="1" y2="1"><stop offset="0" stop-color="#2a5ab8"/><stop offset="0.5" stop-color="#5aa0f0"/><stop offset="1" stop-color="#2a62c8"/></linearGradient></defs>
  <rect x="168.4" y="1155.2" width="23.2" height="16.3" rx="1.2" fill="none" stroke="#7a7a7a" stroke-width="1.3"/>
  <circle cx="180" cy="1173.9" r="1" fill="#555"/>
  <line x1="174" y1="1176.3" x2="185.9" y2="1176.3" stroke="#888" stroke-width="1.1"/>
  <path d="M170.1 1162.3 C173 1158.5 176.5 1156.5 180 1155.9 C183.5 1157 186.5 1159.5 188.7 1162.3 C185.5 1163.5 183.5 1166 182.5 1169.7 C179.5 1166 175 1163 170.1 1162.3 Z" fill="url(#sg)" stroke="#3a4a6a" stroke-width="0.6"/>
  <path d="M172.5 1161 C176 1161.5 180 1164 182.2 1167 M175 1159 C179 1159.5 183 1162 185 1165 M178 1157.2 C182 1158 185 1160 187 1162.5 M176 1164 C178 1161 182 1158 184.5 1157.6 M179.5 1166.2 C181 1163 184 1160.5 187.2 1160.5" fill="none" stroke="#27406a" stroke-width="0.55"/>
  <path d="M175.5 1162.5 L179 1161.6 L181.5 1163.6 L178.2 1164.6 Z" fill="#eef4fb"/>
  <!-- doc + cursor -->
  <path d="M223.2 1153.6 L231.4 1161.6 M231.4 1153.6 L223.2 1161.6" stroke="#f00" stroke-width="1.9"/>
  <path d="M217.9 1163.9 H223.8 L226.4 1166.6 V1176.3 H217.9 Z" fill="#fff" stroke="#555" stroke-width="1.5" stroke-linejoin="round"/>
  <path d="M223.4 1164 V1167 H226.4 Z" fill="#777"/>
  <g stroke="#555" stroke-width="1"><line x1="220" y1="1167.8" x2="220" y2="1169.3"/><line x1="220" y1="1170.2" x2="224.6" y2="1170.2"/><line x1="220" y1="1173.2" x2="224.6" y2="1173.2"/></g>
  <path d="M228.2 1158.2 L229 1171.5 L231.6 1168.8 L234.8 1174.8 L237.5 1173.4 L234.4 1167.6 L238.3 1167.2 Z" fill="#fff" stroke="#555" stroke-width="0.9" stroke-linejoin="round"/>
  <!-- fx eye -->
  <path d="M275.4 1160.8 C274.8 1159.4 272.8 1159.4 272.1 1161.6 L269.2 1173.6 C268.6 1175.8 266.8 1176.3 266 1175.2" fill="none" stroke="#000" stroke-width="1.35"/>
  <circle cx="275.1" cy="1160.9" r="0.9" fill="#000"/><circle cx="266.4" cy="1175" r="1.1" fill="#000"/>
  <line x1="268.6" y1="1164.9" x2="274.5" y2="1164.9" stroke="#000" stroke-width="0.9"/>
  <path d="M276.4 1167.2 Q277.5 1165.6 279.4 1166.6 L282.4 1172.4 Q283.8 1173.8 285.3 1172" fill="none" stroke="#000" stroke-width="1.2"/>
  <path d="M285.4 1166.8 Q284.6 1165.5 282.6 1166.4 L279.4 1172.4 Q278 1173.8 276.3 1172.2" fill="none" stroke="#000" stroke-width="1.2"/>
  <circle cx="284.8" cy="1167" r="0.8" fill="#000"/><circle cx="276.5" cy="1172" r="0.8" fill="#000"/>
  <path d="M276.4 1158.4 L279 1155 C281 1153.6 284.3 1153.6 286.3 1155 L288.9 1158.4 L286.3 1161.6 C284.3 1163.2 281 1163.2 279 1161.6 Z" fill="#f4f4f4" stroke="#2c1f5c" stroke-width="1.5"/>
  <circle cx="282.6" cy="1158.2" r="2.7" fill="#3a6ad0"/>
  <circle cx="282.4" cy="1157.8" r="1" fill="#111"/>
</svg>
<div class="a" style="left:1188px;top:1152px;width:122px;height:32px;border:1.5px solid #0a70cc;border-radius:3.5px;background:#f8f9fc"></div>
<div class="t" style="left:1188px;top:1160px;width:122px;text-align:center">OK</div>
<div class="a" style="left:1324px;top:1152px;width:122px;height:32px;border:1px solid #d0d0d0;border-bottom-color:#bcbcbc;border-radius:4px;background:#fbfbfb"></div>
<div class="t" style="left:1324px;top:1160px;width:122px;text-align:center">Abbrechen</div>
<div class="a" style="left:1460px;top:1152px;width:122px;height:32px;border:1px solid #e3e3e3;border-radius:4px;background:#f8f8f8"></div>
<div class="t dis" style="left:1460px;top:1160px;width:122px;text-align:center">Anwenden</div>

<svg class="a" style="left:1580px;top:1182px" width="16" height="16" viewBox="1580 1182 16 16"><g fill="#a3a3a3"><rect x="1591" y="1186" width="2.8" height="2.8"/><rect x="1587" y="1190" width="2.8" height="2.8"/><rect x="1591" y="1190" width="2.8" height="2.8"/><rect x="1584" y="1194" width="2" height="2.8"/><rect x="1587" y="1194" width="2.8" height="2.8"/><rect x="1591" y="1194" width="2.8" height="2.8"/></g></svg>
</body></html>
